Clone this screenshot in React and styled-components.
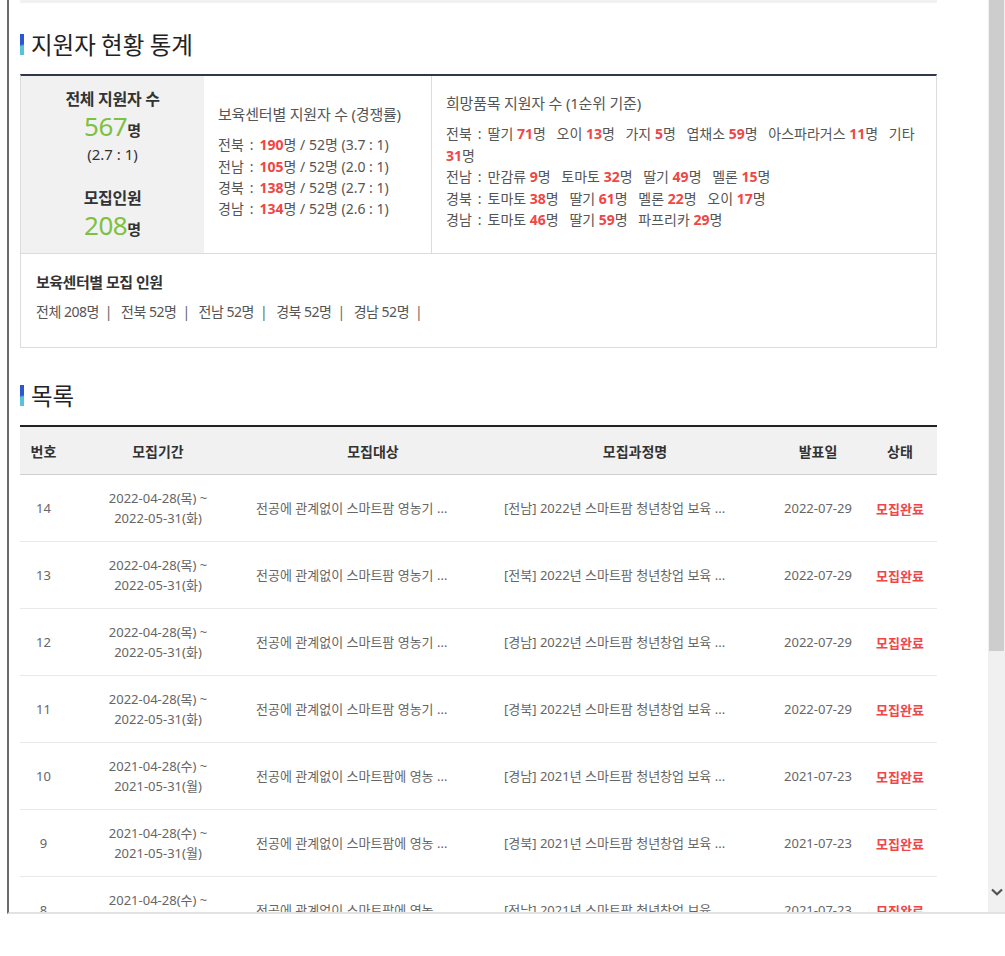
import React from 'react';
import styled, { createGlobalStyle } from 'styled-components';

const GlobalStyle = createGlobalStyle`
  html, body { margin: 0; padding: 0; background: #fff; overflow: hidden; }
  body { font-family: "Noto Sans", "Noto Sans CJK KR", sans-serif; color: #555; }
  * { box-sizing: border-box; }
`;

const Frame = styled.div`
  margin-left: 7px;
  width: 998px;
  height: 914px;
  border-left: 2px solid #6b6b6b;
  border-bottom: 2px solid #e2e2e2;
  display: flex;
  overflow: hidden;
`;

const Viewport = styled.div`
  flex: 1;
  overflow: hidden;
`;

const Page = styled.div`
  margin-left: 11px;
  width: 917px;
`;

const TopStrip = styled.div`
  height: 3px;
  background: #f1f1f1;
`;

const SectionTitle = styled.h2`
  display: flex;
  align-items: center;
  height: 24px;
  margin: ${p => p.$top}px 0 18px;
  font-family: "Noto Sans CJK KR", sans-serif;
  font-size: 23.5px;
  font-weight: 400;
  line-height: 24px;
  color: #222;
  &::before {
    content: '';
    width: 4px;
    height: 21px;
    margin-right: 7px;
    background: linear-gradient(168deg, #2c57d4 48%, #58c2da 58%);
  }
`;

const StatBox = styled.div`
  border: 1px solid #dcdcdc;
  border-top: 2px solid #2f394b;
`;

const StatRow = styled.div`
  display: grid;
  grid-template-columns: 183px 228px 1fr;
  min-height: 178px;
  border-bottom: 1px solid #dcdcdc;
`;

const TotalCell = styled.div`
  background: #f1f1f1;
  display: flex;
  flex-direction: column;
  justify-content: center;
  align-items: center;
  text-align: center;
  padding-bottom: 2px;
`;

const TotalLabel = styled.div`
  font-size: 16px;
  font-weight: 700;
  line-height: 24px;
  letter-spacing: -0.3px;
  color: #333;
  margin-top: ${p => p.$gap || 0}px;
`;

const TotalValue = styled.div`
  display: flex;
  align-items: baseline;
  justify-content: center;
  height: 31px;
  line-height: 31px;
  color: #333;
`;

const GreenNum = styled.span`
  font-size: 26px;
  font-weight: 400;
  color: #7cc142;
  letter-spacing: -0.5px;
`;

const Unit = styled.span`
  font-size: 15px;
  font-weight: 700;
  color: #333;
`;

const Ratio = styled.div`
  font-size: 15px;
  line-height: 24px;
  color: #333;
`;

const InfoCell = styled.div`
  display: flex;
  flex-direction: column;
  justify-content: center;
  padding: 0 4px 6px 14px;
  border-right: ${p => (p.$divider ? '1px solid #dcdcdc' : 'none')};
  font-size: 14px;
  color: #555;
  word-break: keep-all;
`;

const InfoTitle = styled.div`
  font-size: 15px;
  letter-spacing: -0.2px;
  line-height: 22px;
  margin-bottom: 9px;
`;

const InfoLine = styled.div`
  line-height: 21.4px;
`;

const Colon = styled.span`
  margin: 0 6px 0 6px;
`;

const Red = styled.b`
  color: #f04646;
  font-weight: 700;
`;

const Item = styled.span`
  margin-left: ${p => (p.$first ? 0 : 7)}px;
`;

const QuotaRow = styled.div`
  padding: 17px 15px 24px;
`;

const QuotaTitle = styled.div`
  font-size: 15px;
  font-weight: 700;
  line-height: 22px;
  letter-spacing: -0.5px;
  color: #333;
  margin-bottom: 8px;
`;

const QuotaList = styled.div`
  font-size: 14px;
  line-height: 22px;
  letter-spacing: -0.5px;
  color: #555;
`;

const Sep = styled.span`
  margin: 0 9px 0 6px;
  color: #666;
`;

const Board = styled.div`
  border-top: 2px solid #222;
`;

const COLS = '47px 182px 248px 276px 90px 74px';

const HeadRow = styled.div`
  display: grid;
  grid-template-columns: ${COLS};
  height: 48px;
  align-items: center;
  background: #f1f1f1;
  border-bottom: 1px solid #cfcfcf;
`;

const HeadCell = styled.div`
  text-align: center;
  font-size: 14px;
  font-weight: 700;
  color: #333;
`;

const BodyRow = styled.div`
  display: grid;
  grid-template-columns: ${COLS};
  height: 67px;
  align-items: center;
  border-bottom: 1px solid #e9e9e9;
`;

const Cell = styled.div`
  font-size: 13px;
  line-height: 20px;
  color: #666;
  text-align: ${p => (p.$left ? 'left' : 'center')};
  padding-left: ${p => (p.$left ? '7px' : '0')};
  white-space: nowrap;
  overflow: hidden;
`;

const Status = styled.div`
  text-align: center;
  font-size: 13px;
  font-weight: 700;
  color: #f04646;
`;

const Scrollbar = styled.div`
  width: 17px;
  background: #f0f0f0;
  display: flex;
  flex-direction: column;
`;

const Thumb = styled.div`
  height: 651px;
  margin: 0 1px;
  background: #cdcdcd;
`;

const Track = styled.div`
  flex: 1;
`;

const ArrowBtn = styled.div`
  height: 17px;
  margin-bottom: 12px;
  display: flex;
  align-items: center;
  justify-content: center;
`;

const centerStats = [
  ['전북', '190', '3.7'],
  ['전남', '105', '2.0'],
  ['경북', '138', '2.7'],
  ['경남', '134', '2.6'],
];

const cropStats = [
  ['전북', [['딸기', '71'], ['오이', '13'], ['가지', '5'], ['엽채소', '59'], ['아스파라거스', '11'], ['기타', '31']]],
  ['전남', [['만감류', '9'], ['토마토', '32'], ['딸기', '49'], ['멜론', '15']]],
  ['경북', [['토마토', '38'], ['딸기', '61'], ['멜론', '22'], ['오이', '17']]],
  ['경남', [['토마토', '46'], ['딸기', '59'], ['파프리카', '29']]],
];

const quotas = [['전체', 208], ['전북', 52], ['전남', 52], ['경북', 52], ['경남', 52]];

const p2022 = { start: '2022-04-28(목) ~', end: '2022-05-31(화)', target: '전공에 관계없이 스마트팜 영농기 ...', year: '2022', date: '2022-07-29' };
const p2021 = { start: '2021-04-28(수) ~', end: '2021-05-31(월)', target: '전공에 관계없이 스마트팜에 영농 ...', year: '2021', date: '2021-07-23' };

const rows = [
  { no: 14, region: '전남', ...p2022 },
  { no: 13, region: '전북', ...p2022 },
  { no: 12, region: '경남', ...p2022 },
  { no: 11, region: '경북', ...p2022 },
  { no: 10, region: '경남', ...p2021 },
  { no: 9, region: '경북', ...p2021 },
  { no: 8, region: '전남', ...p2021 },
];

const headers = ['번호', '모집기간', '모집대상', '모집과정명', '발표일', '상태'];

export default function App() {
  return (
    <>
      <GlobalStyle />
      <Frame>
        <Viewport>
          <Page>
            <TopStrip />
            <SectionTitle $top={29}>지원자 현황 통계</SectionTitle>
            <StatBox>
              <StatRow>
                <TotalCell>
                  <TotalLabel>전체 지원자 수</TotalLabel>
                  <TotalValue><GreenNum>567</GreenNum><Unit>명</Unit></TotalValue>
                  <Ratio>(2.7 : 1)</Ratio>
                  <TotalLabel $gap={20}>모집인원</TotalLabel>
                  <TotalValue><GreenNum>208</GreenNum><Unit>명</Unit></TotalValue>
                </TotalCell>
                <InfoCell $divider>
                  <InfoTitle>보육센터별 지원자 수 (경쟁률)</InfoTitle>
                  {centerStats.map(([r, n, ratio]) => (
                    <InfoLine key={r}>
                      {r}<Colon>:</Colon><Red>{n}</Red>명 / 52명 ({ratio} : 1)
                    </InfoLine>
                  ))}
                </InfoCell>
                <InfoCell>
                  <InfoTitle>희망품목 지원자 수 (1순위 기준)</InfoTitle>
                  {cropStats.map(([r, items]) => (
                    <InfoLine key={r}>
                      {r}<Colon>:</Colon>
                      {items.map(([name, n], i) => (
                        <React.Fragment key={name}>
                          <Item $first={i === 0}>{name} <Red>{n}</Red>명</Item>{' '}
                        </React.Fragment>
                      ))}
                    </InfoLine>
                  ))}
                </InfoCell>
              </StatRow>
              <QuotaRow>
                <QuotaTitle>보육센터별 모집 인원</QuotaTitle>
                <QuotaList>
                  {quotas.map(([r, n]) => (
                    <React.Fragment key={r}>
                      {r} {n}명<Sep>|</Sep>
                    </React.Fragment>
                  ))}
                </QuotaList>
              </QuotaRow>
            </StatBox>
            <SectionTitle $top={35}>목록</SectionTitle>
            <Board>
              <HeadRow>
                {headers.map(h => <HeadCell key={h}>{h}</HeadCell>)}
              </HeadRow>
              {rows.map(r => (
                <BodyRow key={r.no}>
                  <Cell>{r.no}</Cell>
                  <Cell>{r.start}<br />{r.end}</Cell>
                  <Cell $left>{r.target}</Cell>
                  <Cell $left>[{r.region}] {r.year}년 스마트팜 청년창업 보육 ...</Cell>
                  <Cell>{r.date}</Cell>
                  <Status>모집완료</Status>
                </BodyRow>
              ))}
            </Board>
          </Page>
        </Viewport>
        <Scrollbar>
          <Thumb />
          <Track />
          <ArrowBtn>
            <svg width="12" height="8" viewBox="0 0 12 8">
              <polyline points="1,1.5 6,6.2 11,1.5" fill="none" stroke="#505050" strokeWidth="2.2" />
            </svg>
          </ArrowBtn>
        </Scrollbar>
      </Frame>
    </>
  );
}
